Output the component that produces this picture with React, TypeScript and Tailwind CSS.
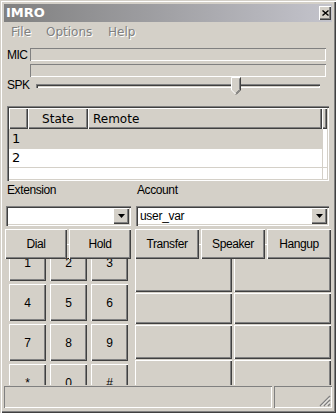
import React from "react";

const raised =
  "shadow-[inset_1px_1px_0_#fff,inset_-1px_-1px_0_#404040,inset_-2px_-2px_0_#808080]";
const field =
  "shadow-[inset_1px_1px_0_#808080,inset_2px_2px_0_#404040,inset_-1px_-1px_0_#fff,inset_-2px_-2px_0_#d4d0c8]";
const thin = "shadow-[inset_1px_1px_0_#808080,inset_-1px_-1px_0_#fff]";
const sans = "[font-family:'Liberation_Sans',Arial,sans-serif]";
const deja = "[font-family:'DejaVu_Sans',sans-serif]";

function DropBtn() {
  return (
    <div className={`w-[16px] h-[16px] bg-[#d4d0c8] flex items-center justify-center ${raised}`}>
      <svg width="7" height="4" viewBox="0 0 7 4">
        <path d="M0 0H7L3.5 4Z" fill="#000" />
      </svg>
    </div>
  );
}

function Btn({ label, cls }: { label?: string; cls: string }) {
  return (
    <div
      className={`bg-[#d4d0c8] flex items-center justify-center text-[12px] tracking-[-0.4px] text-black ${sans} ${raised} ${cls}`}
    >
      {label}
    </div>
  );
}

export default function App() {
  const keys = ["1", "2", "3", "4", "5", "6", "7", "8", "9", "*", "0", "#"];
  return (
    <div
      className={`w-[336px] h-[413px] bg-[#d4d0c8] p-[4px] flex flex-col overflow-hidden shadow-[inset_1px_1px_0_#d4d0c8,inset_2px_2px_0_#fff,inset_-1px_-1px_0_#404040,inset_-2px_-2px_0_#808080] ${sans}`}
    >
      {/* Title bar */}
      <div className="h-[18px] shrink-0 flex items-center justify-between bg-linear-to-r from-[#808080] to-[#c4c4cc] pl-[2px] pr-[1px]">
        <span className={`text-white font-bold text-[13px] leading-[18px] ${deja}`}>IMRO</span>
        <div className={`w-[12px] h-[14px] bg-[#d4d0c8] flex items-center justify-center ${raised}`}>
          <svg width="7" height="6" viewBox="0 0 7 6">
            <path d="M0.5 0.5L6.5 5.5M6.5 0.5L0.5 5.5" stroke="#000" strokeWidth="1.4" />
          </svg>
        </div>
      </div>

      {/* Menu */}
      <div className={`h-[20px] shrink-0 flex items-center text-[12px] text-[#808080] [text-shadow:1px_1px_0_#fff] ${deja}`}>
        <span className="ml-[7px] w-[35px]">File</span>
        <span className="w-[62px]">Options</span>
        <span>Help</span>
      </div>

      <div className="h-[6px] shrink-0" />

      {/* MIC */}
      <div className="h-[13px] shrink-0 flex">
        <span className="w-[26px] pl-[3px] text-[12px] leading-[14px] tracking-[-0.5px] text-black">MIC</span>
        <div className={`w-[296px] h-[13px] ${thin}`} />
      </div>
      <div className="h-[3px] shrink-0" />
      {/* SPK bar */}
      <div className="h-[13px] shrink-0 flex">
        <span className="w-[26px]" />
        <div className={`w-[296px] h-[13px] ${thin}`} />
      </div>
      {/* Slider row */}
      <div className="h-[18px] shrink-0 flex">
        <span className="w-[32px] pl-[3px] text-[12px] leading-[14px] tracking-[-0.5px] text-black self-start mt-[1px]">SPK</span>
        <div className="relative w-[284px] h-[18px]">
          <div className="absolute left-0 right-0 top-[7px] h-[4px] shadow-[inset_1px_1px_0_#808080,inset_2px_2px_0_#404040,inset_-1px_-1px_0_#fff]" />
          <svg className="absolute left-[195px] top-0" width="10" height="18" viewBox="0 0 10 18">
            <path d="M0.5 0.5H9.5V13L5 17.5L0.5 13Z" fill="#d4d0c8" />
            <path d="M0.5 13V0.5H9" stroke="#fff" fill="none" />
            <path d="M9.5 0.5V13L5 17.5" stroke="#404040" fill="none" />
            <path d="M8.5 1.5V12.6L5 16.2" stroke="#808080" fill="none" />
            <path d="M0.5 13L4.5 17" stroke="#fff" fill="none" />
          </svg>
        </div>
      </div>

      <div className="h-[11px] shrink-0" />

      {/* Table */}
      <div className={`ml-[3px] w-[322px] h-[75px] shrink-0 p-[2px] bg-white ${field}`}>
        <div className={`h-[21px] flex text-[12px] text-black ${deja}`}>
          <div className={`w-[19px] bg-[#d4d0c8] ${raised}`} />
          <div className={`w-[60px] bg-[#d4d0c8] flex items-center justify-center ${raised}`}>State</div>
          <div className={`w-[234px] bg-[#d4d0c8] flex items-center pl-[5px] ${raised}`}>Remote</div>
          <div className={`w-[5px] bg-[#d4d0c8] ${raised}`} />
        </div>
        <div className={`h-[20px] flex text-[13px] text-black ${deja}`}>
          <div className="w-[313px] bg-[#d4d0c8] pl-[3px] leading-[20px]">1</div>
          <div className="flex-1 border-l border-[#d4d0c8] bg-white" />
        </div>
        <div className={`h-[18px] flex text-[13px] text-black ${deja}`}>
          <div className="w-[313px] pl-[3px] leading-[18px]">2</div>
          <div className="flex-1 border-l border-[#d4d0c8]" />
        </div>
        <div className="h-[1px] bg-[#d4d0c8]" />
        <div className="h-[11px] flex">
          <div className="w-[313px]" />
          <div className="flex-1 border-l border-[#d4d0c8]" />
        </div>
      </div>

      <div className="h-[2px] shrink-0" />

      {/* Labels */}
      <div className="h-[14px] shrink-0 flex text-[12px] leading-[14px] tracking-[-0.4px] text-black">
        <span className="w-[133px] pl-[3px]">Extension</span>
        <span>Account</span>
      </div>

      <div className="h-[9px] shrink-0" />

      {/* Combos */}
      <div className="h-[20px] shrink-0 flex">
        <div className={`ml-[2px] w-[125px] h-[20px] bg-white flex items-center justify-end pr-[2px] ${field}`}>
          <DropBtn />
        </div>
        <div className={`ml-[5px] w-[193px] h-[20px] bg-white flex items-center justify-between pl-[4px] pr-[2px] ${field}`}>
          <span className="text-[12px] tracking-[-0.3px] text-black">user_var</span>
          <DropBtn />
        </div>
      </div>

      <div className="h-[3px] shrink-0" />

      {/* Action buttons */}
      <div className="relative z-10 h-[30px] shrink-0 flex">
        <Btn label="Dial" cls="ml-[1px] w-[62px] h-[30px]" />
        <Btn label="Hold" cls="ml-[2px] w-[62px] h-[30px]" />
        <Btn label="Transfer" cls="ml-[4px] w-[64px] h-[30px]" />
        <Btn label="Speaker" cls="ml-[2px] w-[64px] h-[30px]" />
        <Btn label="Hangup" cls="ml-[2px] w-[64px] h-[30px]" />
      </div>

      {/* Keypad + right panel */}
      <div className="-mt-[15px] h-[141px] shrink-0 overflow-hidden flex items-start">
        <div className="ml-[5px] grid grid-cols-[37px_37px_37px] auto-rows-[37px] gap-x-[4px] gap-y-[3px]">
          {keys.map((k) => (
            <Btn key={k} label={k} cls="w-[37px] h-[37px]" />
          ))}
        </div>
        <div className="ml-[7px] grid grid-cols-[97px_97px] grid-rows-[48px_31px_34px_30px] gap-x-[2px] gap-y-[1px]">
          {Array.from({ length: 8 }).map((_, i) => (
            <Btn key={i} cls="w-[97px] h-full" />
          ))}
        </div>
      </div>

      {/* Status bar */}
      <div className="h-[24px] shrink-0 flex gap-[2px] pt-[1px] pb-[1px]">
        <div className={`w-[268px] h-full ${thin}`} />
        <div className={`flex-1 h-full relative ${thin}`}>
          <svg className="absolute right-[1px] bottom-[1px]" width="12" height="12" viewBox="0 0 12 12">
            <path d="M11 1L1 11M11 5L5 11M11 9L9 11" stroke="#808080" strokeWidth="1.4" />
            <path d="M11 2.5L2.5 11M11 6.5L6.5 11" stroke="#fff" strokeWidth="0.8" />
          </svg>
        </div>
      </div>
    </div>
  );
}
